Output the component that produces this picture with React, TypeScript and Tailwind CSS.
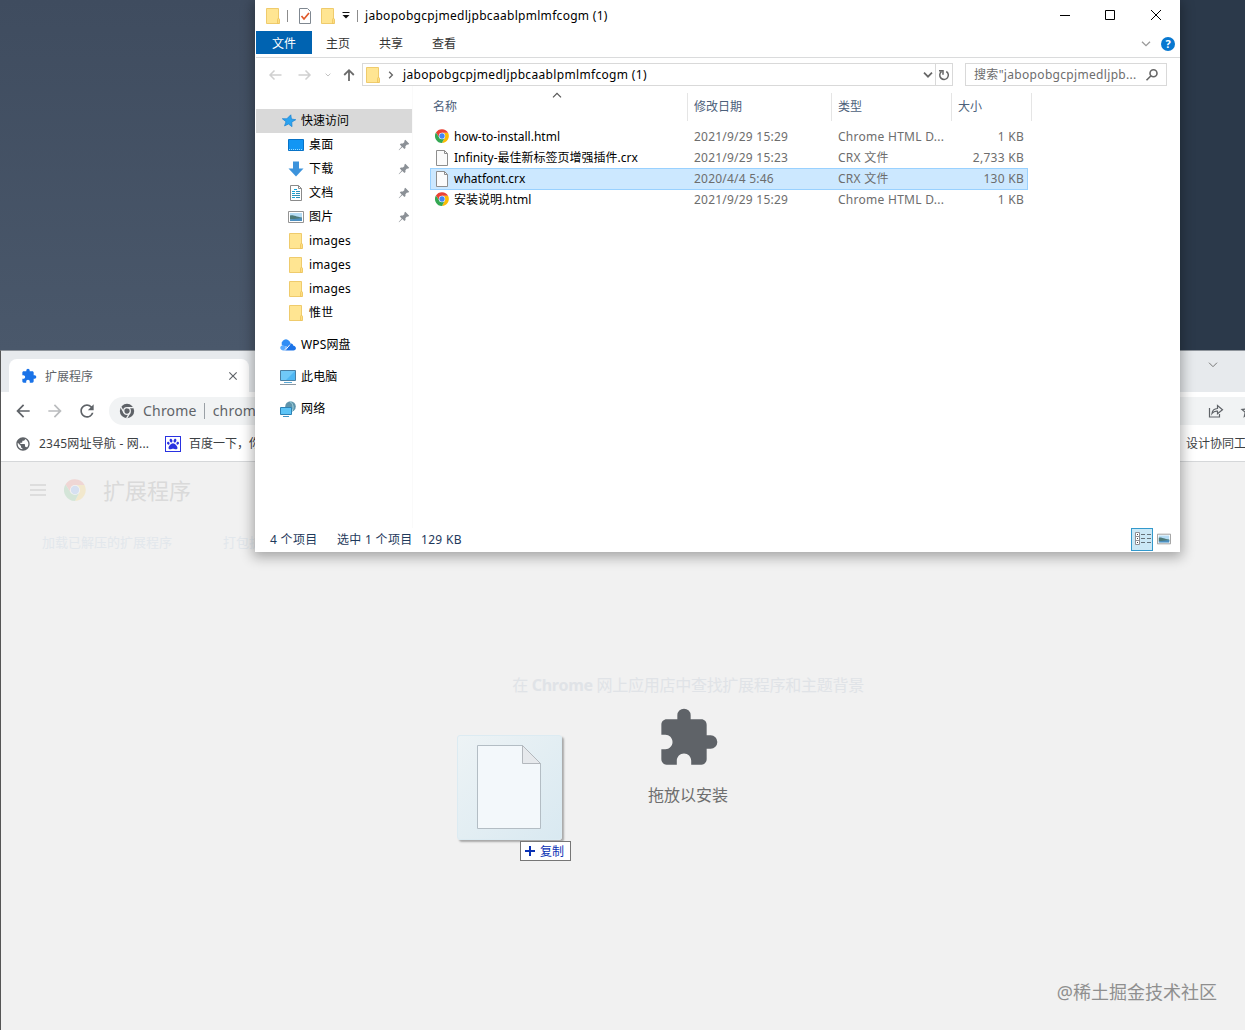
import React from 'react';
import { MdArrowBack, MdArrowForward, MdClose, MdExtension, MdPublic, MdRefresh, MdStarBorder } from 'react-icons/md';
import { FaPaw } from 'react-icons/fa';

type IconProps = { className?: string };

const FolderIcon: React.FC<IconProps> = ({ className = 'h-4 w-4' }) => (
  <svg viewBox="0 0 16 16" className={className}>
    <path d="M1.500.5h12v10l.5 1v4H1.500z" fill="#ffe592" stroke="#efcb6c" />
    <path d="M12.500 15.500v-4l1-1.500 1 1.500v4z" fill="#ffdd80" stroke="#e9c057" strokeWidth=".7" />
  </svg>
);

const FileIcon: React.FC<IconProps> = ({ className = 'h-4 w-4' }) => (
  <svg viewBox="0 0 16 16" className={className}>
    <path d="M2.500.5h8l3 3v12h-11z" fill="#fbfbfb" stroke="#8e8e8e" />
    <path d="M10.500.5v3h3" fill="none" stroke="#8e8e8e" />
  </svg>
);

const ChromeIcon: React.FC<IconProps> = ({ className = 'h-4 w-4' }) => (
  <svg viewBox="0 0 48 48" className={className}>
    <path d="M24 13h20.800a24 24 0 0 1-20.800 35l9.500-18.500z" fill="#fbbc05" />
    <path d="M3.200 12A24 24 0 0 1 44.800 13H24L14.500 29.500z" fill="#ea4335" />
    <path d="M3.200 12 14.500 29.500 33.500 29.500 24 48A24 24 0 0 1 3.200 12z" fill="#34a853" />
    <circle cx="24" cy="24" r="11" fill="#fff" />
    <circle cx="24" cy="24" r="9.200" fill="#4285f4" />
  </svg>
);

const ChromeMonoIcon: React.FC<IconProps> = ({ className }) => (
  <svg viewBox="0 0 16 16" className={className}>
    <circle cx="8" cy="8" r="7.200" fill="#5f6368" />
    <circle cx="8" cy="8" r="3.300" fill="#5f6368" stroke="#f1f3f4" strokeWidth="1.300" />
    <path d="M8 4.700h6.800M5.100 9.700 1.700 3.800M10.900 9.700 7.600 15.400" stroke="#f1f3f4" strokeWidth="1.300" />
  </svg>
);

const PictureIcon: React.FC<IconProps> = ({ className = 'h-4 w-4' }) => (
  <svg viewBox="0 0 16 16" className={className}>
    <path d="M.5 2.500h15v11H.5z" fill="#fff" stroke="#949494" />
    <path d="M2 4h12v8H2z" fill="#b5dcf5" />
    <path d="M2 6.500c3-1 5 1 12 2v2H2z" fill="#4d7a78" />
    <path d="M2 10.500 14 9v3H2z" fill="#4c8fc0" />
  </svg>
);

const PinIcon: React.FC = () => (
  <svg viewBox="0 0 12 12" className="h-3 w-3">
    <path d="M7.300.8 11.200 4.700 10 5.700 9 5.500 7.400 7.200 7.500 9 6.400 10.100 4.400 8.100 1 11.200.7 10.900 3.700 7.400 1.800 5.500 2.900 4.400 4.900 4.500 6.500 3 6.200 2z" fill="#8b9096" />
  </svg>
);

const StarIcon: React.FC = () => (
  <svg viewBox="0 0 16 16" className="h-4 w-4">
    <path d="M9.800 1.800 10.400 6l4.400.7-4 2.300.2 4.700-3.500-2.700-4 1.900 1.500-4.200-3.700-3 4.500.1z" fill="#2ba3f0" stroke="#1b83d1" strokeWidth=".7" />
  </svg>
);

const DesktopIcon: React.FC = () => (
  <svg viewBox="0 0 16 16" className="h-4 w-4">
    <path d="M.5 2.500h15v11H.5z" fill="#1296f4" stroke="#0873c7" />
    <path d="M1 12.500h14" stroke="#9bdcff" strokeDasharray="1 1" />
  </svg>
);

const DownloadIcon: React.FC = () => (
  <svg viewBox="0 0 16 16" className="h-4 w-4">
    <path d="M5 .5h6v7h4.500L8 15.500.5 7.500H5z" fill="#3c93dc" />
  </svg>
);

const DocumentIcon: React.FC = () => (
  <svg viewBox="0 0 16 16" className="h-4 w-4">
    <path d="M2.500.5h8l3 3v12h-11z" fill="#fff" stroke="#8a8a8a" />
    <path d="M10.500.5v3h3" fill="none" stroke="#8a8a8a" />
    <path d="M6 4.500h3M4 6.500h3M4 8.500h3M4 12.500h3" stroke="#12a5d8" />
    <path d="M8 6.500h4M8 8.500h4M4 10.500h8M8 12.500h4" stroke="#2f90b8" />
  </svg>
);

const CloudIcon: React.FC = () => (
  <svg viewBox="0 0 16 16" className="h-4 w-4">
    <path d="M2 8.500A4.200 4.200 0 0 1 10 5l2 6z" fill="#2f8df5" />
    <path d="M4 13.500 9 7.500c2-2 4.200-.8 4.400 1.300 3.500.6 3.300 4.700 0 4.700z" fill="#1a73e8" />
    <path d="M3.500 13.500C-.5 13.500-.8 9 2.500 8.500c2-.3 3 .7 3.500 1.500l-2 3.500z" fill="#5aabff" />
    <path d="m5 13.500 5-6" stroke="#fff" />
  </svg>
);

const ComputerIcon: React.FC = () => (
  <svg viewBox="0 0 16 16" className="h-4 w-4">
    <path d="M.5 1.500h15v10H.5z" fill="#4fb7f3" stroke="#4a7fa3" />
    <path d="M1 2h14L6 11H1z" fill="#7fd0fa" opacity=".7" />
    <path d="M4 13.500h8" stroke="#5ba8d6" />
    <path d="M0 15.500h16" stroke="#8b98a3" />
  </svg>
);

const NetworkIcon: React.FC = () => (
  <svg viewBox="0 0 16 16" className="h-4 w-4">
    <circle cx="10.500" cy="5.500" r="5.300" fill="#5f94ab" />
    <path d="M10 .5c3 2 4 6 2 10" fill="none" stroke="#a8dbe4" />
    <path d="M.5 6.500h11v7H.5z" fill="#5cc4f7" stroke="#2d82b5" />
    <path d="M3 15.500h6" stroke="#4293c4" />
  </svg>
);

const DetailsIcon: React.FC = () => (
  <svg viewBox="0 0 18 16" className="h-4 w-[18px]">
    <path d="M1.500 1.500h4v12h-4zM1.500 5.500h4M1.500 9.500h4" fill="#fff" stroke="#8f8f95" />
    <path d="M3 3.500h1M3 7.500h1M3 11.500h1" stroke="#444" />
    <path d="M7 3.500h4M13 3.500h4M7 7.500h4M13 7.500h4M7 11.500h4M13 11.500h4" stroke="#65727a" />
  </svg>
);

const Chevron: React.FC<IconProps> = ({ className }) => (
  <svg viewBox="0 0 10 6" className={className} fill="none" stroke="currentColor">
    <path d="m1 .7 4 4 4-4" />
  </svg>
);

interface SideItem {
  label: string;
  icon: React.ReactNode;
  pinned?: boolean;
}

const quickAccess: SideItem[] = [
  { label: '桌面', icon: <DesktopIcon />, pinned: true },
  { label: '下载', icon: <DownloadIcon />, pinned: true },
  { label: '文档', icon: <DocumentIcon />, pinned: true },
  { label: '图片', icon: <PictureIcon />, pinned: true },
  { label: 'images', icon: <FolderIcon /> },
  { label: 'images', icon: <FolderIcon /> },
  { label: 'images', icon: <FolderIcon /> },
  { label: '惟世', icon: <FolderIcon /> },
];

const locations: SideItem[] = [
  { label: 'WPS网盘', icon: <CloudIcon /> },
  { label: '此电脑', icon: <ComputerIcon /> },
  { label: '网络', icon: <NetworkIcon /> },
];

const files = [
  { name: 'how-to-install.html', date: '2021/9/29 15:29', type: 'Chrome HTML D...', size: '1 KB', html: true },
  { name: 'Infinity-最佳新标签页增强插件.crx', date: '2021/9/29 15:23', type: 'CRX 文件', size: '2,733 KB', html: false },
  { name: 'whatfont.crx', date: '2020/4/4 5:46', type: 'CRX 文件', size: '130 KB', html: false, selected: true },
  { name: '安装说明.html', date: '2021/9/29 15:29', type: 'Chrome HTML D...', size: '1 KB', html: true },
];

const TitleBar: React.FC = () => (
  <div className="flex h-[31px] items-center pl-[9px]">
    <FolderIcon />
    <span className="ml-1.5 h-3 w-px bg-[#8c8c8c]" />
    <svg viewBox="0 0 16 18" className="ml-[9px] h-[18px] w-4">
      <path d="M2.500 1.500h8l3 3v12h-11z" fill="#fff" stroke="#7f8790" />
      <path d="m4.500 9 2.500 3 5-6" fill="none" stroke="#e0592a" strokeWidth="1.700" />
    </svg>
    <FolderIcon className="ml-[7px] h-4 w-4" />
    <svg viewBox="0 0 8 7" className="ml-1.5 h-[7px] w-2">
      <path d="M.5.5h7" stroke="#111" />
      <path d="M.5 3h7L4 6.500z" fill="#111" />
    </svg>
    <span className="ml-[7px] h-3 w-px bg-[#8c8c8c]" />
    <span className="ml-[7px] tracking-[0.3px]">jabopobgcpjmedljpbcaablpmlmfcogm (1)</span>
    <div className="ml-auto flex h-full">
      <svg viewBox="0 0 46 31" className="h-full w-[46px]" stroke="#000" fill="none">
        <path d="M18 15.500h10" />
      </svg>
      <svg viewBox="0 0 46 31" className="h-full w-[46px]" stroke="#000" fill="none">
        <path d="M17.500 10.500h9v9h-9z" />
      </svg>
      <svg viewBox="0 0 46 31" className="h-full w-[46px]" stroke="#000" fill="none">
        <path d="m17 10 10 10M27 10 17 20" />
      </svg>
    </div>
  </div>
);

const RibbonTabs: React.FC = () => (
  <div className="flex h-[27px] items-start border-b border-[#dadbdc]">
    <div className="flex h-[23px] w-14 items-center justify-center bg-[#0063b1] pt-0.5 text-white">文件</div>
    <div className="flex h-[25px] items-center gap-[29px] pl-3.5 text-[#333]">
      <span>主页</span>
      <span>共享</span>
      <span>查看</span>
    </div>
    <div className="ml-auto flex h-[25px] items-center gap-2.5 pr-[5px]">
      <Chevron className="h-1.5 w-2.5 stroke-[1.3] text-[#9a9a9a]" />
      <div className="flex h-3.5 w-3.5 items-center justify-center rounded-full bg-[#0878d0] text-[11px] font-bold leading-none text-white">
        ?
      </div>
    </div>
  </div>
);

const AddressRow: React.FC = () => (
  <div className="mt-[5px] flex h-[23px] items-center">
    <svg viewBox="0 0 14 12" className="ml-3 h-3 w-3.5" fill="none" stroke="#d0d0d0" strokeWidth="1.500">
      <path d="M13.500 6H2M6.500 1.500 2 6l4.500 4.500" />
    </svg>
    <svg viewBox="0 0 14 12" className="ml-4 h-3 w-3.5" fill="none" stroke="#d0d0d0" strokeWidth="1.500">
      <path d="M.5 6H12M7.500 1.500 12 6l-4.500 4.500" />
    </svg>
    <Chevron className="ml-[13px] h-1 w-1.5 stroke-[1.5] text-[#bbb]" />
    <svg viewBox="0 0 12 14" className="ml-3 h-3.5 w-3" fill="none" stroke="#6b6b6b" strokeWidth="1.800">
      <path d="M6 13V2.500M1.200 7 6 2.200 10.800 7" />
    </svg>
    <div className="ml-[7px] flex h-full w-[591px] items-center border border-[#d9d9d9] pl-0.5">
      <FolderIcon />
      <Chevron className="ml-1.5 h-1.5 w-2 -rotate-90 stroke-[1.7] text-[#666]" />
      <span className="ml-2 tracking-[0.33px]">jabopobgcpjmedljpbcaablpmlmfcogm (1)</span>
      <Chevron className="mr-0.5 ml-auto h-1.5 w-2.5 stroke-[1.7] text-[#666]" />
      <div className="flex h-full w-[17px] items-center justify-center border-l border-[#d9d9d9]">
        <svg viewBox="0 0 12 12" className="h-3 w-3" fill="none" stroke="#666" strokeWidth="1.500">
          <path d="M8.300 2.500A4.300 4.300 0 1 1 3.500 2.700M1 1.700h4v4" />
        </svg>
      </div>
    </div>
    <div className="ml-3 flex h-full w-[202px] items-center border border-[#d9d9d9] pr-[7px] pl-2 text-[#6d6d6d]">
      <span className="tracking-[0.32px] whitespace-nowrap">搜索"jabopobgcpjmedljpb...</span>
      <svg viewBox="0 0 14 14" className="ml-auto h-3.5 w-3.5" fill="none" stroke="#666" strokeWidth="1.600">
        <circle cx="8.500" cy="5.300" r="3.500" />
        <path d="M6 7.800 1.500 12.300" />
      </svg>
    </div>
  </div>
);

const Sidebar: React.FC = () => (
  <div className="w-[156px] pt-[23px]">
    <div className="flex h-6 items-center gap-1 bg-[#d9d9d9] pl-[25px]">
      <StarIcon />
      <span>快速访问</span>
    </div>
    {quickAccess.map((item, i) => (
      <div key={i} className="flex h-6 items-center gap-[5px] pr-0.5 pl-8">
        {item.icon}
        <span className="tracking-[0.15px]">{item.label}</span>
        {item.pinned && (
          <span className="ml-auto">
            <PinIcon />
          </span>
        )}
      </div>
    ))}
    {locations.map((item) => (
      <div key={item.label} className="mt-2 flex h-6 items-center gap-[5px] pl-6">
        {item.icon}
        <span className="tracking-[0.15px]">{item.label}</span>
      </div>
    ))}
  </div>
);

const FileList: React.FC = () => (
  <div className="flex-1 border-l border-[#fafafa] pl-[17px]">
    <div className="relative mt-[7px] flex h-7 w-[602px] text-[#4c607a]">
      <div className="flex w-[258px] items-center border-r border-[#e5e5e5] pl-[3px]">名称</div>
      <div className="flex w-36 items-center border-r border-[#e5e5e5] pl-1.5">修改日期</div>
      <div className="flex w-[120px] items-center border-r border-[#e5e5e5] pl-1.5">类型</div>
      <div className="flex w-20 items-center border-r border-[#e5e5e5] pl-1.5">大小</div>
      <Chevron className="absolute -top-px left-[122px] h-1.5 w-2.5 rotate-180 stroke-[1.2] text-[#555]" />
    </div>
    <div className="mt-[5px] w-[598px]">
      {files.map((file) => (
        <div
          key={file.name}
          className={
            file.selected
              ? '-mb-px flex h-[22px] items-center border-y border-[#99d1ff] bg-[#cce8ff] pb-px text-[#6d6d6d] shadow-[inset_1px_0_#99d1ff,inset_-1px_0_#99d1ff]'
              : 'flex h-[21px] items-center text-[#6d6d6d]'
          }
        >
          <div className="flex w-[264px] items-center gap-1 pl-1 text-black">
            {file.html ? <ChromeIcon className="mr-px mb-px ml-px h-3.5 w-3.5" /> : <FileIcon />}
            <span>{file.name}</span>
          </div>
          <span className="w-36 tracking-[0.22px]">{file.date}</span>
          <span className="w-[108px] tracking-[0.27px] whitespace-nowrap">{file.type}</span>
          <span className="flex-1 pr-1 text-right tracking-[0.27px]">{file.size}</span>
        </div>
      ))}
    </div>
  </div>
);

const ExplorerWindow: React.FC = () => (
  <div className="absolute top-0 left-[255px] flex h-[552px] w-[925px] flex-col bg-white pl-px text-[12px] leading-4 text-black shadow-[0_3px_12px_2px_rgba(0,0,0,0.32)]">
    <TitleBar />
    <RibbonTabs />
    <AddressRow />
    <div className="flex flex-1">
      <Sidebar />
      <FileList />
    </div>
    <div className="flex h-6 items-center pl-3.5 tracking-[0.3px] text-[#1e395b]">
      <span className="w-[67px]">4 个项目</span>
      <span className="w-[84px]">选中 1 个项目</span>
      <span>129 KB</span>
      <div className="mr-[9px] mb-0.5 ml-auto flex items-center gap-1">
        <div className="flex h-[23px] w-[22px] items-center justify-center border border-[#3399cc] bg-[#cbe8f6] pl-px">
          <DetailsIcon />
        </div>
        <PictureIcon className="mb-px h-3.5 w-3.5" />
      </div>
    </div>
  </div>
);

const BrowserChrome: React.FC = () => (
  <>
    <div className="flex h-[41px] items-end bg-[#e7eaed] pl-2">
      <div className="flex h-[33px] w-60 items-center rounded-t-lg bg-white pr-[9px] pl-3 text-[12px] text-[#5f6368]">
        <MdExtension className="h-4 w-4 text-[#1a73e8]" />
        <span className="ml-2 pt-0.5">扩展程序</span>
        <MdClose className="ml-auto h-3.5 w-3.5" />
      </div>
      <Chevron className="mr-[27px] mb-6 ml-auto h-1.5 w-2.5 text-[#777]" />
    </div>
    <div className="flex h-[37px] items-center bg-white pl-3 text-[#5f6368]">
      <MdArrowBack className="h-5 w-5" />
      <MdArrowForward className="ml-3 h-5 w-5 text-[#babcbe]" />
      <MdRefresh className="ml-3 h-5 w-5" />
      <div className="ml-3 flex h-7 flex-1 items-center rounded-l-full bg-[#f1f3f4] pl-2.5 text-[14px]">
        <ChromeMonoIcon className="h-4 w-4" />
        <span className="ml-2 tracking-[0.2px]">Chrome</span>
        <span className="mr-2 ml-[7px] h-4 w-px bg-[#9aa0a6]" />
        <span className="tracking-[0.2px]">chrome</span>
        <svg viewBox="0 0 16 14" className="mr-px ml-auto h-3.5 w-4" fill="none" stroke="#5f6368" strokeWidth="1.200">
          <path d="M1.500 4v9h10v-3" />
          <path d="M4 9.500c.3-3 2-4.800 5.500-5V1.500l5 4.200-5 4V7.200C7 7 5.300 7.700 4 9.500z" />
        </svg>
        <MdStarBorder className="-mr-3 ml-3.5 h-[18px] w-[18px]" />
      </div>
    </div>
    <div className="flex h-[33px] items-center border-b border-[#d5d7d9] bg-white pb-[3px] pl-3.5 text-[12px] text-[#3c4043]">
      <MdPublic className="h-4 w-4 text-[#5f6368]" />
      <span className="ml-2 w-[118px] tracking-[0.2px]">2345网址导航 - 网...</span>
      <div className="ml-2 flex h-4 w-4 items-center justify-center border border-[#2932e1]">
        <FaPaw className="h-3 w-3 text-[#2932e1]" />
      </div>
      <span className="ml-2">百度一下，你</span>
      <span className="ml-auto w-[59px] overflow-hidden whitespace-nowrap">设计协同工</span>
    </div>
  </>
);

const ExtensionsPage: React.FC = () => (
  <div className="flex-1 bg-[#f1f1f1]">
    <div className="flex h-14 items-center pl-[29px]">
      <svg viewBox="0 0 16 12" className="h-3 w-4" stroke="#d6d6d6" strokeWidth="1.500">
        <path d="M0 1h16M0 6h16M0 11h16" />
      </svg>
      <ChromeIcon className="ml-[18px] h-[22px] w-[22px] opacity-15" />
      <span className="ml-[17px] text-[22px] text-[#dadada]">扩展程序</span>
    </div>
    <div className="flex h-[50px] items-center gap-[51px] pl-[41px] text-[13px] text-[#e2e7ec]">
      <span>加载已解压的扩展程序</span>
      <span>打包扩</span>
    </div>
    <div className="flex flex-col items-center pt-[105px] pl-[130px]">
      <div className="text-[16px] tracking-[-0.28px] whitespace-nowrap text-[#e0e3e7]">
        在 <b>Chrome</b> 网上应用店中查找扩展程序和主题背景
      </div>
      <MdExtension className="mt-[9px] h-16 w-16 text-[#5f6368]" />
      <span className="mt-[13px] text-[16px] text-[#6e6e6e]">拖放以安装</span>
    </div>
  </div>
);

const BrowserWindow: React.FC = () => (
  <div className="absolute top-[350px] left-0 flex h-[680px] w-[1245px] flex-col border-t border-l border-t-[#8e949b] border-l-[#555]">
    <BrowserChrome />
    <ExtensionsPage />
  </div>
);

const DragPreview: React.FC = () => (
  <div className="absolute top-[735px] left-[457px] flex w-[114px] flex-col">
    <div className="flex h-[105px] w-[105px] items-center justify-center rounded-[3px] border border-[#dcebf2] bg-gradient-to-br from-[#edf3f5] to-[#d9e9f1] pr-0.5 pb-0.5 shadow-[2px_2px_2px_rgba(0,0,0,0.3)]">
      <svg viewBox="0 0 64 84" className="h-[84px] w-16">
        <path d="M.5.5h45l18 18v65H.5z" fill="#f3f8fb" stroke="#b3bdc4" />
        <path d="M45.500.5v18h18z" fill="#e6e9ec" stroke="#b3b8bd" />
      </svg>
    </div>
    <div className="mt-px flex h-5 w-[51px] items-center gap-[5px] self-end border border-[#767676] bg-white pl-1 text-[12px] text-[#0a32b4]">
      <svg viewBox="0 0 10 10" className="h-2.5 w-2.5" stroke="#0a32b4" strokeWidth="2">
        <path d="M5 0v10M0 5h10" />
      </svg>
      <span className="pt-px">复制</span>
    </div>
  </div>
);

export default function App() {
  return (
    <div className="relative h-[1030px] w-[1245px] overflow-hidden bg-[linear-gradient(to_right,transparent_20%,#2b394a_90%),linear-gradient(to_bottom,#3f4c5f,#4a586b_34%)] font-['Noto_Sans','Noto_Sans_CJK_SC',sans-serif]">
      <BrowserWindow />
      <ExplorerWindow />
      <DragPreview />
      <div className="absolute right-7 bottom-6 text-[18px] text-[#8f8f8f]">@稀土掘金技术社区</div>
    </div>
  );
}
